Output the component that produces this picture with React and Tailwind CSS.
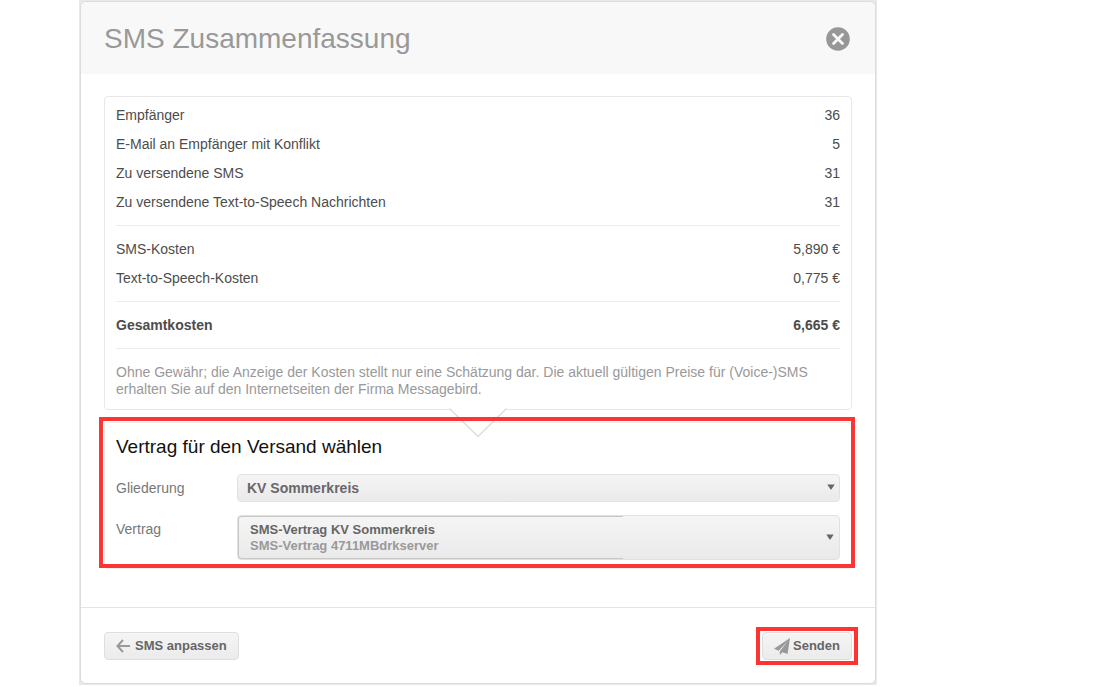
import { useState } from 'react';

const empfaenger = [
  { label: 'Empfänger', wert: '36' },
  { label: 'E-Mail an Empfänger mit Konflikt', wert: '5' },
  { label: 'Zu versendene SMS', wert: '31' },
  { label: 'Zu versendene Text-to-Speech Nachrichten', wert: '31' }
];

const kosten = [
  { label: 'SMS-Kosten', wert: '5,890 €' },
  { label: 'Text-to-Speech-Kosten', wert: '0,775 €' }
];

const gliederungen = ['KV Sommerkreis'];

const vertraege = [
  { id: '4711', name: 'SMS-Vertrag KV Sommerkreis', konto: 'SMS-Vertrag 4711MBdrkserver' }
];

function Zeilen({ daten, fett }) {
  return (
    <dl className={fett ? 'font-bold' : ''}>
      {daten.map(z => (
        <div key={z.label} className="flex justify-between leading-[29px]">
          <dt>{z.label}</dt>
          <dd>{z.wert}</dd>
        </div>
      ))}
    </dl>
  );
}

function Trenner() {
  return <hr className="mt-2 mb-[9px] border-[#ececec]" />;
}

function Pfeil() {
  return (
    <svg className="pointer-events-none absolute right-[5px] top-1/2 -mt-1 h-[6px] w-2" viewBox="0 0 8 6" aria-hidden="true">
      <path d="M0.3 0.5h7.4L4.4 5.5h-0.8z" fill="#666" />
    </svg>
  );
}

function Markierung({ className }) {
  return <div className={`pointer-events-none absolute border-4 border-[#fc3434] ${className}`} />;
}

export default function App() {
  const [gliederung, setGliederung] = useState(gliederungen[0]);
  const [vertragId, setVertragId] = useState(vertraege[0].id);

  const vertrag = vertraege.find(v => v.id === vertragId);

  return (
    <div className="bg-white pl-[79px] font-['Liberation_Sans',Arial,sans-serif] text-sm text-[#4c4c4c]">
      <div className="w-full max-w-[798px] bg-[#e9e9e9] px-px pt-px pb-px">
        <div role="dialog" aria-labelledby="titel" className="rounded-md border border-[#dcdcdc] bg-white">
          <header className="flex items-center justify-between rounded-t-md bg-[#f8f8f8] pt-[17px] pr-[25px] pb-[15px] pl-[23px]">
            <h1 id="titel" className="text-[28px] leading-10 text-[#999]">SMS Zusammenfassung</h1>
            <button type="button" aria-label="Schließen" className="h-6 w-6">
              <svg viewBox="0 0 24 24" className="h-6 w-6" aria-hidden="true">
                <circle cx="12" cy="12" r="11.8" fill="#979797" />
                <path d="M7.5 7.5l9 9M16.5 7.5l-9 9" stroke="#f8f8f8" strokeWidth="2.8" strokeLinecap="round" />
              </svg>
            </button>
          </header>

          <main className="px-[23px] pt-[22px] pb-[38px]">
            <section className="relative rounded border border-[#e8e8e8] px-[11px] pt-1 pb-[11px]">
              <Zeilen daten={empfaenger} />
              <Trenner />
              <Zeilen daten={kosten} />
              <Trenner />
              <Zeilen daten={[{ label: 'Gesamtkosten', wert: '6,665 €' }]} fett />
              <Trenner />
              <p className="mt-[15px] leading-[17px] text-[#999]">
                Ohne Gewähr; die Anzeige der Kosten stellt nur eine Schätzung dar. Die aktuell gültigen Preise für (Voice-)SMS erhalten Sie auf den Internetseiten der Firma Messagebird.
              </p>
              <svg className="absolute top-full left-1/2 z-10 -mt-px -ml-[29px] h-[30px] w-[58px]" viewBox="0 0 58 30" aria-hidden="true">
                <path d="M1 0L29 28.5L57 0z" fill="#fff" />
                <path d="M0.5 0.5L29 28.5L57.5 0.5" fill="none" stroke="#ddd" strokeWidth="1.3" />
              </svg>
            </section>

            <section className="relative mt-3 rounded border border-[#eee] px-[11px] pt-3 pb-2">
              <h2 className="text-[19px] leading-6 text-[#111]">Vertrag für den Versand wählen</h2>

              <div className="mt-[15px] flex">
                <label htmlFor="gliederung" className="w-[121px] shrink-0 leading-7 text-[#777]">Gliederung</label>
                <div className="relative flex-1">
                  <select
                    id="gliederung"
                    value={gliederung}
                    onChange={(e) => setGliederung(e.target.value)}
                    className="block h-7 w-full appearance-none rounded border border-[#e1e1e1] bg-linear-to-b from-[#f5f5f5] to-[#eaeaea] px-[9px] font-bold text-[#6b666b]"
                  >
                    {gliederungen.map(g => <option key={g}>{g}</option>)}
                  </select>
                  <Pfeil />
                </div>
              </div>

              <div className="mt-[13px] flex">
                <label htmlFor="vertrag" className="w-[121px] shrink-0 leading-7 text-[#777]">Vertrag</label>
                <div className="relative flex-1 rounded border border-[#e1e1e1] bg-linear-to-b from-[#f5f5f5] to-[#eaeaea]">
                  <div className="w-[64%] rounded-l border-y border-l border-[#c8c8c8] px-[11px] pt-[5px] pb-1 text-[13px] leading-4 font-bold text-[#666]">
                    <div>{vertrag.name}</div>
                    <div className="text-[#999]">{vertrag.konto}</div>
                  </div>
                  <Pfeil />
                  <select
                    id="vertrag"
                    value={vertragId}
                    onChange={(e) => setVertragId(e.target.value)}
                    className="absolute inset-0 h-full w-full cursor-pointer opacity-0"
                  >
                    {vertraege.map(v => <option key={v.id} value={v.id}>{v.name}</option>)}
                  </select>
                </div>
              </div>
              <Markierung className="-top-[6px] -right-[4px] -left-[6px] bottom-0 z-20" />
            </section>
          </main>

          <footer className="flex items-center justify-between border-t border-[#e4e4e4] px-[23px] pt-6 pb-[23px] text-[13px] font-bold text-[#666]">
            <button type="button" className="flex h-7 items-center gap-[5px] rounded border border-[#dedede] bg-linear-to-b from-[#f5f5f5] to-[#ebebeb] px-[11px]">
              <svg viewBox="0 0 14 14" className="h-[14px] w-[14px]" fill="none" stroke="#999" strokeWidth="2" aria-hidden="true">
                <path d="M7 1L1.5 7L7 13M1.5 7H14" />
              </svg>
              SMS anpassen
            </button>
            <div className="relative">
              <button type="button" className="flex h-7 items-center gap-[3px] rounded border border-[#dedede] bg-linear-to-b from-[#f5f5f5] to-[#ebebeb] px-[11px]">
                <svg viewBox="0 0 16 17" className="h-[17px] w-4" fill="#999" aria-hidden="true">
                  <path d="M16 0L0 10.8L4.6 12.8L14 3L5.8 13.2V17L8.4 14.3L13.6 16z" />
                </svg>
                Senden
              </button>
              <Markierung className="-inset-x-[6px] -inset-y-[5px]" />
            </div>
          </footer>
        </div>
      </div>
    </div>
  );
}
